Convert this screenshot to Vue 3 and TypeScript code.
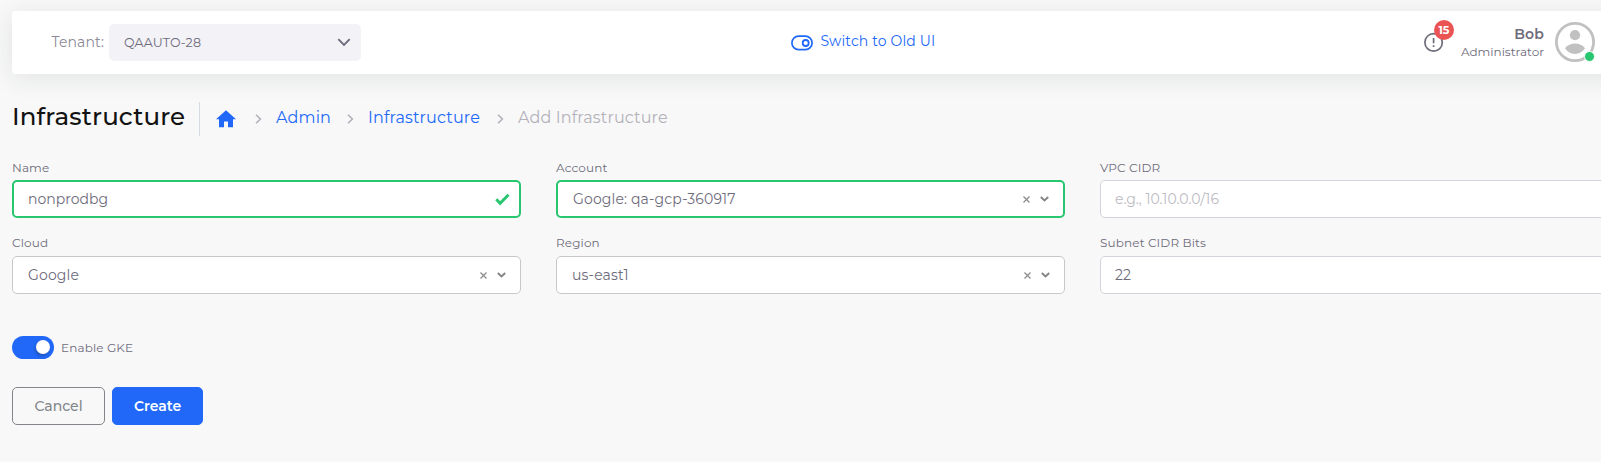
<script setup lang="ts">
interface Field {
  id: string
  label: string
  value: string
  kind: 'text' | 'select'
  valid?: boolean
  placeholder?: boolean
}

const fields: Field[] = [
  { id: 'name', label: 'Name', value: 'nonprodbg', kind: 'text', valid: true },
  { id: 'account', label: 'Account', value: 'Google: qa-gcp-360917', kind: 'select', valid: true },
  { id: 'vpc', label: 'VPC CIDR', value: 'e.g., 10.10.0.0/16', kind: 'text', placeholder: true },
  { id: 'cloud', label: 'Cloud', value: 'Google', kind: 'select' },
  { id: 'region', label: 'Region', value: 'us-east1', kind: 'select' },
  { id: 'subnet', label: 'Subnet CIDR Bits', value: '22', kind: 'text' },
]
</script>

<template>
  <div class="page">
    <header class="topbar">
      <div class="tenant">
        <span class="tenant-label">Tenant:</span>
        <div class="tenant-select">
          <span>QAAUTO-28</span>
          <svg width="14" height="9" viewBox="0 0 14 9"><path d="M1.3 1.2 7 6.9l5.7-5.7" fill="none" stroke="#6e6b7b" stroke-width="1.9" /></svg>
        </div>
      </div>
      <a class="switch-ui">
        <svg width="22" height="16" viewBox="0 0 22 16" fill="none" stroke="#2168f8">
          <rect x="0.9" y="1.2" width="20.2" height="13.4" rx="6.7" stroke-width="1.7" />
          <circle cx="14.7" cy="8" r="3" stroke-width="1.8" />
        </svg>
        <span>Switch to Old UI</span>
      </a>
      <div class="profile">
        <div class="alert">
          <svg width="20" height="20" viewBox="0 0 20 20" fill="none" stroke="#6e6b7b" stroke-width="1.7">
            <circle cx="9.6" cy="10.4" r="8.7" />
            <path d="M9.600 6v5.200M9.600 13.300v1.700" />
          </svg>
          <span class="badge">15</span>
        </div>
        <div class="user">
          <strong>Bob</strong>
          <span>Administrator</span>
        </div>
        <div class="avatar">
          <svg width="40" height="40" viewBox="0 0 40 40">
            <circle cx="20" cy="20" r="18.6" fill="#fff" stroke="#c1c1c1" stroke-width="2.8" />
            <circle cx="20" cy="13.2" r="5.1" fill="#c1c1c1" />
            <path d="M10 26.2c2.3-3 6-4.600 10-4.600s7.700 1.600 10 4.600c-2.300 3.600-6 5.700-10 5.700s-7.700-2.100-10-5.700z" fill="#c1c1c1" />
          </svg>
          <span class="status"></span>
        </div>
      </div>
    </header>

    <div class="heading">
      <h1>Infrastructure</h1>
      <nav class="crumbs">
        <svg class="home" width="20" height="18" viewBox="0 0 20 18"><path d="M8 17.300v-5.900h4v5.900h5V9.300h3L10 .3 0 9.300h3v8z" fill="#2168f8" /></svg>
        <svg class="sep" width="7" height="10" viewBox="0 0 7 10"><path d="M1 .7 5.400 5 1 9.300" /></svg>
        <a class="admin">Admin</a>
        <svg class="sep" width="7" height="10" viewBox="0 0 7 10"><path d="M1 .7 5.400 5 1 9.300" /></svg>
        <a class="infra">Infrastructure</a>
        <svg class="sep" width="7" height="10" viewBox="0 0 7 10"><path d="M1 .7 5.400 5 1 9.300" /></svg>
        <span class="current">Add Infrastructure</span>
      </nav>
    </div>

    <main class="form">
      <div v-for="f in fields" :key="f.id" class="field">
        <label>{{ f.label }}</label>
        <div class="control" :class="[f.kind, { valid: f.valid, placeholder: f.placeholder }]">
          <span class="value">{{ f.value }}</span>
          <svg v-if="f.kind === 'text' && f.valid" width="15" height="13" viewBox="0 0 15 13"><path d="M1.300 6.300 5.100 10.300 13.500 1.700" fill="none" stroke="#28c76f" stroke-width="2.900" /></svg>
          <template v-if="f.kind === 'select'">
            <svg width="7" height="7" viewBox="0 0 7 7"><path d="M.5.5l6 6M6.500.5l-6 6" fill="none" stroke="#8c8c8c" stroke-width="1.300" /></svg>
            <svg class="caret" width="9" height="6" viewBox="0 0 9 6"><path d="M.8 1 4.500 4.500 8.200 1" fill="none" stroke="#848484" stroke-width="1.900" /></svg>
          </template>
        </div>
      </div>
    </main>

    <div class="toggle-row">
      <span class="toggle"><span class="knob"></span></span>
      <span class="toggle-label">Enable GKE</span>
    </div>

    <div class="actions">
      <button class="cancel">Cancel</button>
      <button class="create">Create</button>
    </div>
  </div>
</template>

<style>
body {
  background: #f8f8f8;
  overflow: hidden;
}
</style>

<style scoped>
.page {
  box-sizing: border-box;
  width: 1609px;
  height: 462px;
  padding: 11px 0 0 12px;
  background: #f8f8f8;
  color: #6e6b7b;
  font-family: Montserrat, Inter, "Liberation Sans", sans-serif;
  font-size: 14px;
  letter-spacing: 0.14px;
}
svg {
  display: block;
  flex: none;
}
.topbar {
  box-sizing: border-box;
  display: grid;
  grid-template-columns: 779px 1fr auto;
  align-items: center;
  height: 63px;
  margin-right: -12px;
  padding-right: 26px;
  border-radius: 3px;
  background: #fff;
  box-shadow: 0 4px 24px 0 rgba(34, 41, 47, 0.1);
}
.tenant {
  display: flex;
  align-items: center;
  padding-left: 39.5px;
}
.tenant-label {
  width: 57.5px;
  margin-top: -1px;
  color: #8b8996;
  white-space: nowrap;
}
.tenant-select {
  box-sizing: border-box;
  display: flex;
  align-items: center;
  justify-content: space-between;
  width: 252px;
  height: 37px;
  padding: 0 10px 0 15px;
  border-radius: 5px;
  background: #f3f2f7;
  font-size: 12.6px;
}
.switch-ui {
  display: flex;
  align-items: center;
  gap: 7.5px;
  color: #2168f8;
}
.switch-ui svg {
  margin-top: 1px;
}
.switch-ui span {
  margin-top: -3px;
}
.profile {
  display: flex;
  align-items: center;
  margin-top: -1px;
}
.alert {
  position: relative;
  margin-right: 17px;
}
.badge {
  position: absolute;
  top: -12px;
  left: 10px;
  width: 20px;
  height: 20px;
  border-radius: 50%;
  background: #ea5455;
  color: #fff;
  font-size: 11px;
  font-weight: 700;
  line-height: 20px;
  text-align: center;
}
.user {
  display: flex;
  flex-direction: column;
  align-items: flex-end;
  width: 83px;
  margin-top: 2px;
  margin-right: 11px;
  font-size: 12px;
  line-height: 18px;
  letter-spacing: 0;
}
.user strong {
  font-size: 14px;
  font-weight: 600;
  letter-spacing: 0.14px;
}
.avatar {
  position: relative;
}
.status {
  position: absolute;
  right: 0;
  bottom: 0;
  width: 9px;
  height: 9px;
  border: 1px solid #fff;
  border-radius: 50%;
  background: #28c76f;
}
.heading {
  display: flex;
  align-items: center;
  height: 34px;
  margin-top: 28px;
}
h1 {
  box-sizing: border-box;
  width: 188px;
  height: 34px;
  margin: 0;
  border-right: 1px solid #d6dce1;
  color: #121212;
  font-size: 24.5px;
  font-weight: 500;
  line-height: 29px;
}
.crumbs {
  display: flex;
  align-items: center;
  padding-left: 16px;
  color: #2168f8;
  font-size: 16px;
  white-space: nowrap;
}
.crumbs a,
.crumbs span {
  margin-top: -3px;
}
.sep {
  margin-right: 14px;
  fill: none;
  stroke: #b0aeb7;
  stroke-width: 1.5;
}
.home {
  width: 20px;
  margin-top: -1px;
  margin-right: 19px;
}
.admin {
  width: 71px;
}
.infra {
  width: 129px;
}
.current {
  color: #b3b1ba;
}
.form {
  display: grid;
  grid-template-columns: repeat(3, 509px);
  column-gap: 35px;
  row-gap: 18px;
  margin-top: 23px;
}
label {
  display: block;
  height: 20px;
  font-size: 12px;
  line-height: 15px;
}
.field {
  padding-top: 1px;
}
.field:nth-child(n + 4) label {
  line-height: 13px;
}
.field:nth-child(n + 4) {
  padding-top: 0;
}
.control {
  box-sizing: border-box;
  display: flex;
  align-items: center;
  height: 38px;
  padding: 0 14px;
  border: 1px solid #d4d3db;
  border-radius: 5px;
  background: #fff;
}
.control.text {
  letter-spacing: normal;
}
.control.select {
  padding: 0 14px 0 15px;
  border-color: #c8c8c8;
}
.control.valid {
  padding: 0 9px 0 14px;
  border: 2px solid #28c76f;
}
.control.select.valid {
  padding-right: 14px;
  padding-left: 15px;
}
.value {
  flex: 1;
}
.caret {
  margin-left: 10px;
}
.placeholder {
  color: #bcbac3;
}
.toggle-row {
  display: flex;
  align-items: center;
  gap: 7px;
  height: 23px;
  margin-top: 42px;
  font-size: 12px;
}
.toggle {
  box-sizing: border-box;
  display: flex;
  justify-content: flex-end;
  width: 42px;
  height: 23px;
  padding: 4px;
  border-radius: 12px;
  background: #2168f8;
}
.knob {
  width: 14px;
  height: 14px;
  border-radius: 50%;
  background: #fff;
  box-shadow: -1px 2px 3px rgba(34, 41, 47, 0.3);
}
.actions {
  display: flex;
  gap: 7px;
  margin-top: 28px;
}
button {
  box-sizing: border-box;
  height: 38px;
  padding: 0;
  border: 1px solid #82868b;
  border-radius: 5px;
  background: transparent;
  color: #82868b;
  font: 500 14px Montserrat, Inter, "Liberation Sans", sans-serif;
}
.cancel {
  width: 93px;
}
.create {
  width: 91px;
  border-color: #2168f8;
  background: #2168f8;
  color: #fff;
  font-weight: 600;
}
</style>
